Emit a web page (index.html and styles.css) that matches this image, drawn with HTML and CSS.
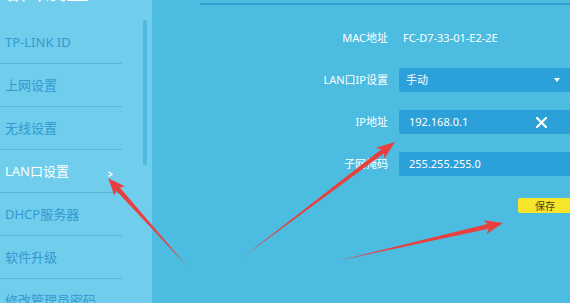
FILE: index.html
```html
<!DOCTYPE html>
<html lang="zh-CN">
<head>
<meta charset="utf-8">
<title>LAN口设置</title>
<link rel="stylesheet" href="styles.css">
</head>
<body>
<div class="page">
  <aside class="sidebar">
    <div class="title">路由设置</div>
    <div class="thumb"></div>
    <ul class="menu">
      <li>TP-LINK ID</li>
      <li>上网设置</li>
      <li>无线设置</li>
      <li class="active">LAN口设置<span class="chev">&gt;</span></li>
      <li>DHCP服务器</li>
      <li>软件升级</li>
      <li>修改管理员密码</li>
    </ul>
  </aside>
  <main class="main">
    <div class="panel">
      <div class="form">
        <div class="label">MAC地址</div>
        <div class="value">FC-D7-33-01-E2-2E</div>

        <div class="label">LAN口IP设置</div>
        <div class="field select">手动<span class="caret"></span></div>

        <div class="label">IP地址</div>
        <div class="field">192.168.0.1
          <svg class="clear" width="11" height="11" viewBox="0 0 11 11"><path d="M1 1 L10 10 M10 1 L1 10" stroke="#fff" stroke-width="2.2" stroke-linecap="round"/></svg>
        </div>

        <div class="label">子网掩码</div>
        <div class="field">255.255.255.0</div>

        <div class="spacer"></div>
        <div class="actions"><button class="save">保存</button></div>
      </div>
    </div>
  </main>
  <svg class="arrows" width="570" height="303" viewBox="0 0 570 303">
    <g fill="#e8403e">
      <polygon transform="translate(187 266) rotate(-131.9)" points="0,0 103,-2.4 101,-7 118,0 101,7 103,2.4"/>
      <polygon transform="translate(243 257) rotate(-37.1)" points="0,0 175,-2.4 172,-7 190.6,0 172,7 175,2.4"/>
      <polygon transform="translate(337 261) rotate(-12.9)" points="0,0 155,-2.4 152,-7 170.3,0 152,7 155,2.4"/>
    </g>
  </svg>
</div>
</body>
</html>
```
FILE: styles.css
```css
html, body {
  margin: 0;
  padding: 0;
}
body {
  width: 570px;
  height: 303px;
  overflow: hidden;
  font-family: "Noto Sans", "Noto Sans CJK SC", sans-serif;
}
.page {
  position: relative;
  display: flex;
  width: 570px;
  height: 303px;
  overflow: hidden;
}
.sidebar {
  position: relative;
  width: 152px;
  flex: none;
  background: #70cdec;
  display: flex;
  flex-direction: column;
}
.title {
  flex: none;
  height: 43px;
  margin-top: -22px;
  margin-left: -3px;
  font-size: 23px;
  line-height: 23px;
  color: #ffffff;
  font-family: "Noto Sans CJK SC", sans-serif;
  white-space: nowrap;
}
.thumb {
  position: absolute;
  left: 143px;
  top: 20px;
  width: 4px;
  height: 145px;
  border-radius: 2px;
  background: #50b9e0;
}
.menu {
  list-style: none;
  margin: 0;
  padding: 0;
}
.menu li {
  width: 117px;
  height: 42px;
  line-height: 42px;
  padding-left: 5px;
  border-bottom: 1px solid #55b8df;
  font-size: 13px;
  color: #3499d0;
  white-space: nowrap;
  display: flex;
  align-items: center;
}
.menu li.active {
  color: #ffffff;
}
.chev {
  margin-left: auto;
  margin-right: 9px;
  font-size: 11px;
  font-weight: bold;
  color: #ffffff;
  transform: scaleX(0.8) translateY(3px);
}
.main {
  flex: 1;
  background: #4cbce1;
  padding-left: 48px;
  padding-top: 3px;
}
.panel {
  border-top: 2px solid #2f9fd3;
  padding-top: 21px;
}
.form {
  display: grid;
  grid-template-columns: 188px 200px;
  column-gap: 11px;
  row-gap: 18px;
  align-items: center;
}
.label {
  text-align: right;
  font-size: 11px;
  color: #ffffff;
  line-height: 24px;
  white-space: nowrap;
}
.value {
  font-size: 11px;
  color: #ffffff;
  line-height: 24px;
  padding-left: 4px;
}
.field {
  height: 24px;
  background: #2ca0d8;
  border-radius: 2px;
  color: #ffffff;
  font-size: 11px;
  line-height: 24px;
  padding-left: 10px;
  display: flex;
  align-items: center;
}
.select {
  padding-left: 7px;
}
.caret {
  margin-left: auto;
  margin-right: 39px;
  width: 0;
  height: 0;
  border-left: 3.5px solid transparent;
  border-right: 3.5px solid transparent;
  border-top: 4px solid #ffffff;
}
.clear {
  margin-left: auto;
  margin-right: 52px;
}
.spacer {
  height: 15px;
}
.actions {
  padding-left: 119px;
  margin-top: 4px;
}
.save {
  display: block;
  width: 54px;
  height: 15px;
  padding: 0;
  border: none;
  border-radius: 2px;
  background: #f6e52a;
  color: #4a4420;
  font-family: "Noto Sans CJK SC", sans-serif;
  font-size: 10px;
  line-height: 15px;
}
.arrows {
  position: absolute;
  left: 0;
  top: 0;
  pointer-events: none;
}
```
